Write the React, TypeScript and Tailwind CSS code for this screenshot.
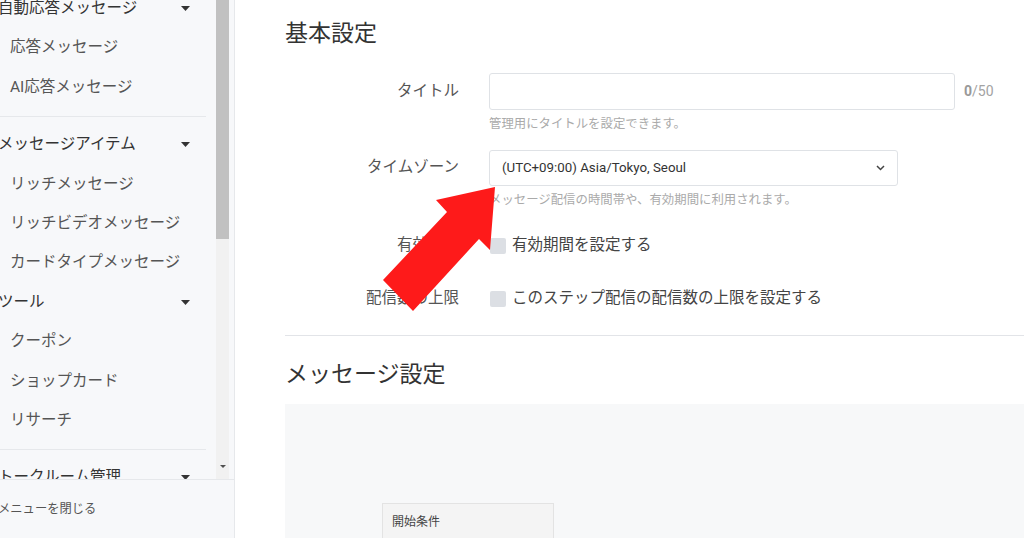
const font = { fontFamily: 'Roboto, "Noto Sans CJK JP", sans-serif' }

function Caret() {
  return (
    <svg width="9" height="5" viewBox="0 0 9 5" className="shrink-0">
      <path d="M0 0h9L4.5 5z" fill="#333" />
    </svg>
  )
}

function NavHeader({ label }: { label: string }) {
  return (
    <div className="flex h-[39.4px] items-center justify-between pr-[26px] text-[15.5px] text-[#333]">
      <span className="-ml-[2px] whitespace-nowrap">{label}</span>
      <Caret />
    </div>
  )
}

function NavItem({ label }: { label: string }) {
  return (
    <div className="flex h-[39.4px] items-center whitespace-nowrap pl-[10px] text-[15.5px] text-[#555]">
      {label}
    </div>
  )
}

function Divider() {
  return <div className="mb-2 mt-[9px] h-px w-[206px] bg-[#e6e8eb]" />
}

function Sidebar() {
  return (
    <aside className="flex h-full w-[235px] shrink-0 flex-col border-r border-[#e6e8eb] bg-[#f7f8fa]">
      <div className="flex h-[480px] shrink-0 overflow-hidden border-b border-[#e6e8eb]">
        <div className="-mt-[11px] w-[216px] shrink-0">
          <NavHeader label="自動応答メッセージ" />
          <NavItem label="応答メッセージ" />
          <NavItem label="AI応答メッセージ" />
          <Divider />
          <NavHeader label="メッセージアイテム" />
          <NavItem label="リッチメッセージ" />
          <NavItem label="リッチビデオメッセージ" />
          <NavItem label="カードタイプメッセージ" />
          <NavHeader label="ツール" />
          <NavItem label="クーポン" />
          <NavItem label="ショップカード" />
          <NavItem label="リサーチ" />
          <Divider />
          <NavHeader label="トークルーム管理" />
        </div>
        <div className="flex w-[13px] shrink-0 flex-col bg-[#f1f1f1]">
          <div className="h-[239px] bg-[#c1c1c1]" />
          <div className="flex-1" />
          <div className="flex h-[14px] justify-center">
            <svg width="6" height="3" viewBox="0 0 6 3">
              <path d="M0 0h6L3 3z" fill="#505050" />
            </svg>
          </div>
        </div>
      </div>
      <div className="flex flex-1 items-center text-[12.3px] text-[#555]">
        <span className="-ml-[2px] whitespace-nowrap">メニューを閉じる</span>
      </div>
    </aside>
  )
}

function Label({ text }: { text: string }) {
  return <div className="w-[174px] shrink-0 text-right text-[15.5px] text-[#555]">{text}</div>
}

function CheckRow({ label, text, className }: { label: string; text: string; className: string }) {
  return (
    <div className={`flex h-6 items-center ${className}`}>
      <Label text={label} />
      <div className="ml-[31px] h-4 w-4 rounded-[2px] bg-[#dcdfe4]" />
      <span className="ml-[6px] text-[15.5px] text-[#444]">{text}</span>
    </div>
  )
}

export default function App() {
  return (
    <div className="relative flex h-[538px] w-[1024px] overflow-hidden bg-white" style={font}>
      <Sidebar />
      <main className="flex flex-1 flex-col pl-[50px]">
        <h2 className="mt-[18px] text-[23px] leading-8 text-[#333]">基本設定</h2>

        <div className="mt-[23px] flex items-center">
          <Label text="タイトル" />
          <div className="ml-[30px] h-[37px] w-[466px] rounded-[3px] border border-[#dfe2e6] bg-white" />
          <span className="ml-[9px] text-[14px] text-[#a3a3a3]">
            <b className="font-bold text-[#999]">0</b>/50
          </span>
        </div>
        <p className="ml-[204px] mt-[6px] text-[12.4px] leading-4 text-[#aaa]">管理用にタイトルを設定できます。</p>

        <div className="mt-[18px] flex items-center">
          <Label text="タイムゾーン" />
          <div className="ml-[30px] flex h-[36px] w-[409px] items-center justify-between rounded-[3px] border border-[#dfe2e6] bg-white pl-[12px] pr-[12px]">
            <span className="text-[13.3px] text-[#333]">(UTC+09:00) Asia/Tokyo, Seoul</span>
            <svg width="9" height="6" viewBox="0 0 9 6">
              <path d="M1 1l3.5 3.5L8 1" fill="none" stroke="#444" strokeWidth="1.5" />
            </svg>
          </div>
        </div>
        <p className="ml-[204px] mt-[6px] text-[12.4px] leading-4 text-[#aaa]">
          メッセージ配信の時間帯や、有効期間に利用されます。
        </p>

        <CheckRow className="mt-[26px]" label="有効期間" text="有効期間を設定する" />
        <CheckRow className="mt-[30px]" label="配信数の上限" text="このステップ配信の配信数の上限を設定する" />

        <div className="mt-[24px] h-px shrink-0 bg-[#e2e4e8]" />

        <h2 className="mt-[23px] text-[23px] leading-8 text-[#333]">メッセージ設定</h2>

        <div className="mt-[13px] flex-1 bg-[#f7f8f9] pl-[97px] pt-[99px]">
          <div className="h-[60px] w-[172px] border border-[#e3e3e3] bg-[#f4f4f4] pl-[9px] pt-[8px] text-[12px] leading-5 text-[#444]">
            開始条件
          </div>
        </div>
      </main>

      <svg className="pointer-events-none absolute left-0 top-0" width="1024" height="538">
        <polygon
          points="495,187 490,250 479,239 413,311 383,280 447,212 436,200"
          fill="#fe1a1a"
        />
      </svg>
    </div>
  )
}
